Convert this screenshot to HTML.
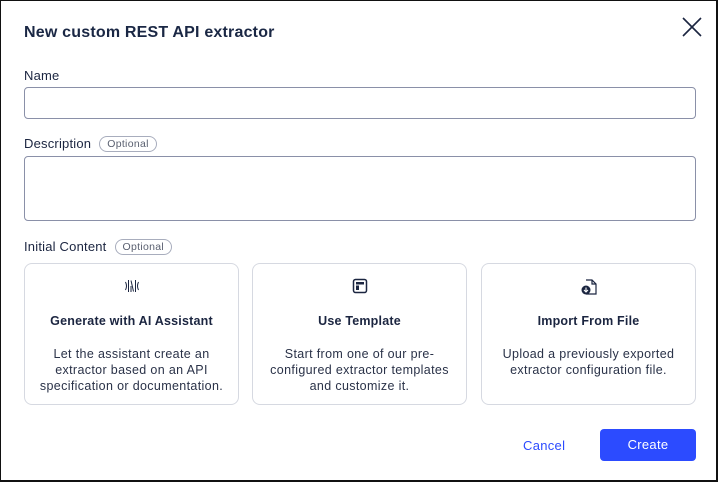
<!DOCTYPE html>
<html><head><style>
*{box-sizing:border-box;margin:0;padding:0}
body{width:719px;height:483px;background:#fff;font-family:"Liberation Sans",sans-serif;color:#1b2540;position:relative;overflow:hidden}
.frame{position:absolute;left:0;top:0;width:718px;height:482px;border:1px solid #111;border-right-width:2px;border-bottom-width:2px}
.t{position:absolute;left:24px;top:24px;font-size:16px;font-weight:bold;color:#1a2744;letter-spacing:0.2px}
.lbl{position:absolute;left:24px;font-size:13px;color:#1b2540;letter-spacing:0.2px}
.in{position:absolute;left:24px;width:672px;border:1px solid #8a90a8;border-radius:4px}
.pill{display:inline-block;font-size:10.5px;color:#5a6070;border:1px solid #a8adbd;border-radius:9px;padding:1px 7px;margin-left:8px;vertical-align:1px;letter-spacing:0.3px}
.card{position:absolute;top:263px;width:215px;height:142px;border:1px solid #d6d9e1;border-radius:8px;text-align:center}
.card svg{position:absolute;left:50%;top:14px;transform:translateX(-50%)}
.card h4{position:absolute;top:50px;width:100%;font-size:12.5px;font-weight:bold;letter-spacing:0.2px}
.card p{position:absolute;top:82px;left:0;width:100%;font-size:12.5px;line-height:16px;color:#2a3248;padding:0 10px;letter-spacing:0.35px}
.x{position:absolute;left:682px;top:17px}
.cancel{position:absolute;left:523px;top:438px;font-size:13px;color:#2c4bff;letter-spacing:0.3px}
.btn{position:absolute;left:600px;top:429px;width:96px;height:32px;background:#2c4bff;border-radius:4px;color:#fff;font-size:13px;text-align:center;line-height:32px;letter-spacing:0.3px}
</style></head><body>
<div class="frame"></div>
<div class="t">New custom REST API extractor</div>
<svg class="x" width="20" height="20" viewBox="0 0 20 20"><path d="M1 1L19 19M19 1L1 19" stroke="#1b2540" stroke-width="1.6"/></svg>
<div class="lbl" style="top:68px">Name</div>
<div class="in" style="top:87px;height:32px"></div>
<div class="lbl" style="top:136px">Description<span class="pill">Optional</span></div>
<div class="in" style="top:156px;height:65px"></div>
<div class="lbl" style="top:239px">Initial Content<span class="pill">Optional</span></div>
<div class="card" style="left:24px">
<svg width="16" height="16" viewBox="0 0 16 16" fill="none" stroke="#1b2540" stroke-width="1"><path d="M1.5 4q2 4 0 8M4.5 2v12M7 2.5l2.5 11M7 8v6M11.5 2v12M14.5 4q-2 4 0 8"/></svg>
<h4>Generate with AI Assistant</h4>
<p>Let the assistant create an extractor based on an API specification or documentation.</p></div>
<div class="card" style="left:252px">
<svg width="16" height="16" viewBox="0 0 16 16"><rect x="1.5" y="1.5" width="13" height="13" rx="2" fill="none" stroke="#1b2540" stroke-width="1.5"/><rect x="4" y="4" width="8" height="2.5" fill="#1b2540"/><rect x="4" y="7.5" width="3" height="4.5" fill="#1b2540"/></svg>
<h4>Use Template</h4>
<p style="padding:0 12px">Start from one of our pre-configured extractor templates and customize it.</p></div>
<div class="card" style="left:481px">
<svg width="18" height="18" viewBox="0 0 18 18"><path d="M6 2h6l4 4v10H6" fill="none" stroke="#1b2540" stroke-width="1.2"/><path d="M12 2v4h4" fill="none" stroke="#1b2540" stroke-width="1.2"/><circle cx="6" cy="12" r="4.5" fill="#1b2540"/><path d="M6 9.5v4.5M4 12l2 2 2-2" stroke="#fff" stroke-width="1.1" fill="none"/></svg>
<h4>Import From File</h4>
<p style="padding:0 8px">Upload a previously exported extractor configuration file.</p></div>
<div class="cancel">Cancel</div>
<div class="btn">Create</div>
</body></html>
